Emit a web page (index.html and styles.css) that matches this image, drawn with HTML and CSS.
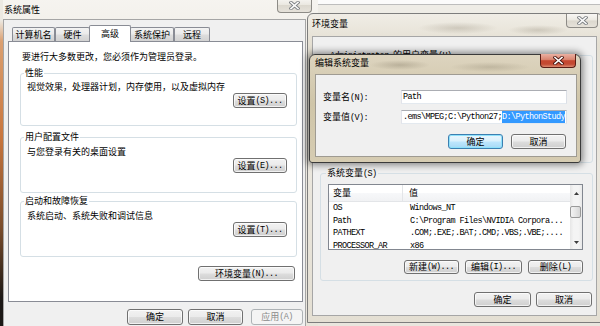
FILE: index.html
```html
<!DOCTYPE html>
<html lang="zh-CN">
<head>
<meta charset="utf-8">
<title>系统属性</title>
<link rel="stylesheet" href="styles.css">
</head>
<body>
<div class="win sysprop">
  <div class="titlebar sp-title">
    <span class="title">系统属性</span>
    <span class="close inactive"><svg width="11" height="9" viewBox="0 0 11 9"><path d="M2 1.5 L9 7.5 M9 1.5 L2 7.5" stroke="#7d8084" stroke-width="3.4" stroke-linecap="square"/><path d="M2 1.5 L9 7.5 M9 1.5 L2 7.5" stroke="#fbfbfb" stroke-width="1.6" stroke-linecap="square"/></svg></span>
  </div>
  <div class="client sp-client">
    <div class="tabs">
      <div class="tab t1">计算机名</div>
      <div class="tab t2">硬件</div>
      <div class="tab t3 active">高级</div>
      <div class="tab t4">系统保护</div>
      <div class="tab t5">远程</div>
    </div>
    <div class="panel">
      <p class="note">要进行大多数更改，您必须作为管理员登录。</p>
      <fieldset class="group g1">
        <legend>性能</legend>
        <p class="desc">视觉效果，处理器计划，内存使用，以及虚拟内存</p>
        <button class="btn set">设置<span class="m">(S)...</span></button>
      </fieldset>
      <fieldset class="group g2">
        <legend>用户配置文件</legend>
        <p class="desc">与您登录有关的桌面设置</p>
        <button class="btn set">设置<span class="m">(E)...</span></button>
      </fieldset>
      <fieldset class="group g3">
        <legend>启动和故障恢复</legend>
        <p class="desc">系统启动、系统失败和调试信息</p>
        <button class="btn set">设置<span class="m">(T)...</span></button>
      </fieldset>
      <button class="btn envbtn">环境变量<span class="m">(N)...</span></button>
    </div>
    <div class="btnrow sp-btns">
      <button class="btn w56">确定</button>
      <button class="btn w55">取消</button>
      <button class="btn w52" disabled>应用<span class="m">(A)</span></button>
    </div>
  </div>
</div>

<div class="win envwin">
  <div class="titlebar env-title">
    <span class="title">环境变量</span>
    <span class="close inactive env-close"><svg width="11" height="9" viewBox="0 0 11 9"><path d="M2 1.5 L9 7.5 M9 1.5 L2 7.5" stroke="#7d8084" stroke-width="3.4" stroke-linecap="square"/><path d="M2 1.5 L9 7.5 M9 1.5 L2 7.5" stroke="#fbfbfb" stroke-width="1.6" stroke-linecap="square"/></svg></span>
  </div>
  <div class="client env-client">
    <fieldset class="group ug">
      <legend><span class="m">Administrator </span>的用户变量<span class="m">(U)</span></legend>
    </fieldset>
    <fieldset class="group sg">
      <legend>系统变量<span class="m">(S)</span></legend>
      <div class="listview">
        <div class="lv-main">
          <div class="lv-head"><span class="c1">变量</span><span class="c2">值</span></div>
          <div class="lv-row m"><span class="c1">OS</span><span class="c2">Windows_NT</span></div>
          <div class="lv-row m"><span class="c1">Path</span><span class="c2">C:\Program Files\NVIDIA Corpora...</span></div>
          <div class="lv-row m"><span class="c1">PATHEXT</span><span class="c2">.COM;.EXE;.BAT;.CMD;.VBS;.VBE;....</span></div>
          <div class="lv-row m"><span class="c1">PROCESSOR_AR</span><span class="c2">x86</span></div>
        </div>
        <div class="vscroll">
          <div class="sb-arrow sb-up"><svg width="5" height="3" viewBox="0 0 5 3"><path d="M0 3 L2.5 0 L5 3 Z" fill="#3d3d3d"/></svg></div>
          <div class="sb-track"><div class="thumb"></div></div>
          <div class="sb-arrow sb-down"><svg width="5" height="3" viewBox="0 0 5 3"><path d="M0 0 L2.5 3 L5 0 Z" fill="#3d3d3d"/></svg></div>
        </div>
      </div>
      <div class="btnrow lv-btns">
        <button class="btn w55">新建<span class="m">(W)...</span></button>
        <button class="btn w57">编辑<span class="m">(I)...</span></button>
        <button class="btn w55">删除<span class="m">(L)</span></button>
      </div>
    </fieldset>
    <div class="btnrow env-btns">
      <button class="btn w57">确定</button>
      <button class="btn w56">取消</button>
    </div>
  </div>
</div>

<div class="win editdlg">
  <div class="titlebar ed-title">
    <span class="title">编辑系统变量</span>
    <span class="close red"><svg width="11" height="9" viewBox="0 0 11 9"><path d="M2 1.5 L9 7.5 M9 1.5 L2 7.5" stroke="#4a1610" stroke-width="3.4" stroke-linecap="square"/><path d="M2 1.5 L9 7.5 M9 1.5 L2 7.5" stroke="#ffffff" stroke-width="1.6" stroke-linecap="square"/></svg></span>
  </div>
  <div class="client ed-client">
    <div class="field">
      <label class="flabel">变量名<span class="m">(N):</span></label>
      <div class="input"><span class="m">Path</span></div>
    </div>
    <div class="field f2">
      <label class="flabel">变量值<span class="m">(V):</span></label>
      <div class="input"><span class="m">.ems\MPEG;C:\Python27;<span class="sel">D:\PythonStudy</span></span></div>
    </div>
    <div class="btnrow ed-btns">
      <button class="btn default w55">确定</button>
      <button class="btn w55">取消</button>
    </div>
  </div>
</div>
</body>
</html>
```

FILE: styles.css
```css
* { box-sizing: border-box; }
html, body { margin: 0; padding: 0; }
body {
  width: 600px;
  height: 326px;
  overflow: hidden;
  position: relative;
  background: linear-gradient(#fbfbfb 0 4px, #bdbdbd 4px 5px, #eeece6 5px 318px, #9b9b9b 318px 319px, #e9e6de 319px);
  font-family: "Noto Sans CJK SC", "Liberation Sans", sans-serif;
  font-size: 9px;
  line-height: 12px;
  color: #000;
}
p { margin: 0; }
button { font: inherit; color: inherit; margin: 0; }

.m {
  font-family: "Liberation Mono", "DejaVu Sans Mono", monospace;
  font-size: 8.5px;
  letter-spacing: -0.6px;
}

/* ---------- generic window ---------- */
.win { position: absolute; display: flex; flex-direction: column; }
.titlebar { display: flex; align-items: flex-start; flex: none; }
.title { white-space: nowrap; }
.close {
  margin-left: auto;
  display: flex;
  align-items: center;
  justify-content: center;
  flex: none;
}
.close.inactive {
  background: linear-gradient(#f8f7f4, #ebe8e1 48%, #dcd8ce 52%, #e6e2da);
  border: 1px solid #8d8b86;
  border-top: none;
  border-radius: 0 0 4px 4px;
}
.close.red {
  background: linear-gradient(#eab0a2, #da8671 42%, #c6472f 52%, #c24a33 78%, #dc8a6f);
  border: 1px solid #5a1d15;
  border-top: none;
  border-radius: 0 0 4px 4px;
}
.client { background: #f0f0f0; }

/* ---------- buttons ---------- */
.btn {
  height: 15px;
  padding: 0;
  border: 1px solid #707070;
  border-radius: 3px;
  background: linear-gradient(#f2f2f2, #ebebeb 48%, #dddddd 52%, #cfcfcf);
  box-shadow: inset 0 0 0 1px rgba(255,255,255,.7);
  display: flex;
  align-items: center;
  justify-content: center;
  white-space: nowrap;
  flex: none;
}
.btn:disabled {
  border-color: #adb2b5;
  background: #f4f4f4;
  box-shadow: none;
  color: #8a8a8a;
}
.btn.default {
  border-color: #3c7fb1;
  background: linear-gradient(#eaf6fd, #d9f0fc 48%, #bee6fd 52%, #a7d9f5);
  box-shadow: inset 0 0 0 1px #8ee1fb;
}
.btnrow { display: flex; justify-content: flex-end; flex: none; }
.w52 { width: 52px; }
.w55 { width: 55px; }
.w56 { width: 56px; }
.w57 { width: 57px; }

/* ---------- group boxes ---------- */
.group {
  margin: 0;
  min-width: 0;
  border: 1px solid #d5dfe5;
  border-radius: 3px;
  display: flex;
  flex-direction: column;
}
.group legend {
  padding: 0 1px;
  margin-left: -3px;
  line-height: 12px;
  white-space: nowrap;
}

/* ---------- system properties window ---------- */
.sysprop {
  left: 0;
  top: -3px;
  width: 318px;
  height: 345px;
  z-index: 1;
  border-left: 3px solid transparent;
  border-image: linear-gradient(#ece9e2 0 24px, #dba071 45px, #c8763e 140px, #7a4d2c 230px, #1c1816 300px) 1;
  background: linear-gradient(#f6f4f0, #ece8e0 25%, #e8e4da);
}
.sp-title { height: 22px; padding: 7px 0 0 1px; }
.sysprop .close { width: 35px; height: 15px; margin: -6px 6px 0 auto; }
.sp-client {
  flex: 1;
  width: 303px;
  border: 1px solid #a5a5a5;
  border-bottom: none;
  padding: 5px 2px 0 4px;
  display: flex;
  flex-direction: column;
}
.tabs {
  display: flex;
  align-items: flex-end;
  height: 16px;
  padding-left: 4px;
  position: relative;
  z-index: 1;
  flex: none;
}
.tab {
  height: 14px;
  border: 1px solid #898c95;
  border-bottom: none;
  border-radius: 2px 2px 0 0;
  background: linear-gradient(#f3f3f3, #ebebeb 45%, #dddddd 55%, #d2d2d2);
  text-align: center;
  line-height: 13px;
  white-space: nowrap;
  flex: none;
}
.t1 { width: 43px; }
.t2 { width: 35px; }
.t3 { width: 42px; margin-left: -1px; }
.t4 { width: 44px; margin-left: -1px; }
.t5 { width: 36px; }
.tab.active {
  height: 17px;
  margin-bottom: -1px;
  background: #fff;
  line-height: 15px;
}
.panel {
  width: 295px;
  height: 261px;
  flex: none;
  background: #fff;
  border: 1px solid #898c95;
  padding: 9px 5px 0 11px;
  display: flex;
  flex-direction: column;
}
.note { margin-left: 2px; white-space: nowrap; }
.sysprop .group { padding: 0 9px 8px 6px; }
.g1 { margin-top: 4px; height: 59px; }
.g2 { margin-top: 5px; height: 62px; }
.g3 { margin-top: 2px; height: 62px; }
.sysprop .g3 { padding-bottom: 7px; }
.desc { white-space: nowrap; margin-top: 3px; }
.g1 .desc { margin-top: 2px; }
.set { width: 54px; margin-top: auto; align-self: flex-end; }
.envbtn { width: 97px; margin-top: 9px; margin-right: 2px; align-self: flex-end; }
.sp-btns { margin-top: 7px; height: 16px; }
.sp-btns .btn { height: 16px; }
.sp-btns .w56 { margin-right: 5px; }
.sp-btns .w55 { margin-right: 8px; }

/* ---------- environment variables window ---------- */
.envwin {
  left: 307px;
  top: 13px;
  width: 296px;
  height: 310px;
  z-index: 2;
  border: 1px solid #7d7d7d;
  border-radius: 6px 6px 0 0;
  padding: 0 5px 6px 4px;
  background:
    radial-gradient(ellipse 40px 6px at 150px 14px, rgba(120,110,90,.25), transparent),
    radial-gradient(ellipse 30px 5px at 230px 16px, rgba(120,110,90,.25), transparent),
    linear-gradient(#f0ede6, #e4dfd2 10%, #ebe7de 50%, #e4dfd3);
}
.env-title { height: 22px; padding-top: 4px; }
.env-close { width: 32px; height: 14px; margin: -4px -1px 0 auto; }
.env-client {
  flex: 1;
  border: 1px solid #a6a6a6;
  padding: 12px 3px 0 7px;
  display: flex;
  flex-direction: column;
}
.ug { height: 114px; padding-left: 11px; flex: none; }
.sg { margin-top: 4px; height: 114px; padding: 4px 9px 7px 7px; flex: none; }
.sg legend { margin-left: -2px; }
.listview {
  height: 66px;
  border: 1px solid #828790;
  background: #fff;
  display: flex;
  flex: none;
}
.lv-main { flex: 1; min-width: 0; overflow: hidden; }
.lv-head {
  display: flex;
  height: 17px;
  line-height: 16px;
  border-bottom: 1px solid #e3e5e8;
  background: linear-gradient(#ffffff, #ffffff 50%, #f7f8fa 50%, #f1f2f4);
}
.lv-head .c1 { border-right: 1px solid #e3e5e8; }
.lv-head .c2 { padding-left: 6px; }
.c1 { width: 74px; padding-left: 4px; flex: none; white-space: nowrap; overflow: hidden; }
.c2 { padding-left: 7px; white-space: nowrap; }
.lv-row { display: flex; height: 12.7px; line-height: 12.7px; }
.vscroll {
  width: 12px;
  flex: none;
  display: flex;
  flex-direction: column;
  background: linear-gradient(90deg, #e6e6e6, #f4f4f4 30%, #f4f4f4 70%, #e9e9e9);
}
.sb-arrow { display: flex; align-items: center; justify-content: center; flex: none; }
.sb-arrow svg { display: block; }
.sb-up { height: 17px; }
.sb-down { height: 14px; }
.sb-track { flex: 1; padding-top: 4px; }
.thumb {
  width: 11px;
  height: 12px;
  border: 1px solid #999;
  border-radius: 2px;
  background: linear-gradient(90deg, #f3f3f3, #e6e6e6 50%, #d6d6d6);
}
.lv-btns { margin-top: 10px; height: 14px; gap: 6px; }
.lv-btns .btn { height: 14px; }
.env-btns { margin-top: 11px; margin-right: 1px; gap: 5px; }

/* ---------- edit dialog ---------- */
.editdlg {
  left: 309px;
  top: 54px;
  width: 272px;
  height: 109px;
  z-index: 3;
  border: 1px solid #3a3a3a;
  border-radius: 6px 6px 3px 3px;
  padding: 0 3px 5px 5px;
  box-shadow: 0 0 7px 2px rgba(0,0,0,.45);
  background:
    radial-gradient(ellipse 30px 5px at 90px 10px, rgba(90,80,60,.25), transparent),
    radial-gradient(ellipse 40px 5px at 180px 12px, rgba(90,80,60,.2), transparent),
    linear-gradient(#ddd4bf, #cfc5a8 45%, #d6ccb2);
}
.ed-title { height: 19px; padding-top: 2px; }
.editdlg .close { width: 36px; height: 14px; margin: -3px 1px 0 auto; }
.ed-client {
  flex: 1;
  border: 1px solid rgba(60,50,30,.45);
  padding: 15px 9px 0 7px;
  display: flex;
  flex-direction: column;
}
.field { display: flex; align-items: center; height: 14px; flex: none; }
.f2 { margin-top: 6px; }
.flabel { width: 78px; flex: none; white-space: nowrap; }
.input {
  flex: 1;
  height: 14px;
  background: #fff;
  border: 1px solid;
  border-color: #abadb3 #dbdfe6 #e3e9ef #e2e3ea;
  padding-left: 1px;
  white-space: nowrap;
  overflow: hidden;
  display: flex;
  align-items: center;
}
.sel {
  background: #3399ff;
  color: #fff;
  display: inline-block;
  line-height: 12px;
}
.ed-btns { margin-top: 10px; margin-right: 1px; gap: 8px; }
```
